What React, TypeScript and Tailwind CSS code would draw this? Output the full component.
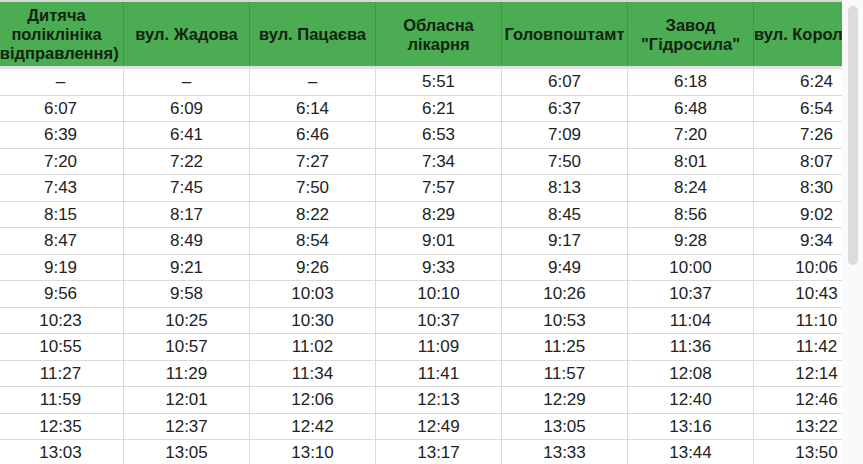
const headers: string[][] = [
  ["Дитяча", "поліклініка", "(відправлення)"],
  ["вул. Жадова"],
  ["вул. Пацаєва"],
  ["Обласна", "лікарня"],
  ["Головпоштамт"],
  ["Завод", "\"Гідросила\""],
  ["вул. Короленка"],
];

const rows: string[][] = [
  ["–", "–", "–", "5:51", "6:07", "6:18", "6:24"],
  ["6:07", "6:09", "6:14", "6:21", "6:37", "6:48", "6:54"],
  ["6:39", "6:41", "6:46", "6:53", "7:09", "7:20", "7:26"],
  ["7:20", "7:22", "7:27", "7:34", "7:50", "8:01", "8:07"],
  ["7:43", "7:45", "7:50", "7:57", "8:13", "8:24", "8:30"],
  ["8:15", "8:17", "8:22", "8:29", "8:45", "8:56", "9:02"],
  ["8:47", "8:49", "8:54", "9:01", "9:17", "9:28", "9:34"],
  ["9:19", "9:21", "9:26", "9:33", "9:49", "10:00", "10:06"],
  ["9:56", "9:58", "10:03", "10:10", "10:26", "10:37", "10:43"],
  ["10:23", "10:25", "10:30", "10:37", "10:53", "11:04", "11:10"],
  ["10:55", "10:57", "11:02", "11:09", "11:25", "11:36", "11:42"],
  ["11:27", "11:29", "11:34", "11:41", "11:57", "12:08", "12:14"],
  ["11:59", "12:01", "12:06", "12:13", "12:29", "12:40", "12:46"],
  ["12:35", "12:37", "12:42", "12:49", "13:05", "13:16", "13:22"],
  ["13:03", "13:05", "13:10", "13:17", "13:33", "13:44", "13:50"],
];

export default function App() {
  return (
    <div className="flex h-[464px] w-[863px] overflow-hidden bg-white font-['Liberation_Sans',Arial,sans-serif]">
      <div className="w-[842px] shrink-0 overflow-hidden">
        <div className="-ml-[2px] w-[882px]">
          <div className="flex h-[69px] border-t-2 border-b-[3px] border-t-[#d8d8d8] border-b-[#e2e2e2] bg-[#4cac53]">
            {headers.map((lines, i) => (
              <div
                key={i}
                className={`flex w-[126px] shrink-0 flex-col items-center justify-center border-r border-[#3f9746] pt-[1px] text-center text-[16.5px] font-bold leading-[19px] whitespace-nowrap text-[#10240f] ${i === 0 ? "pr-[8px]" : ""}`}
              >
                {lines.map((l) => (
                  <span key={l}>{l}</span>
                ))}
              </div>
            ))}
          </div>
          {rows.map((row, r) => (
            <div key={r} className="flex h-[26.5px] border-b border-[#dadada]">
              {row.map((cell, c) => (
                <div
                  key={c}
                  className="flex w-[126px] shrink-0 items-center justify-center border-r border-[#dadada] text-[17px] text-[#222]"
                >
                  {cell}
                </div>
              ))}
            </div>
          ))}
        </div>
      </div>
      <div className="flex w-[21px] shrink-0 justify-center bg-[#fafafa] pt-[6px]">
        <div className="h-[259px] w-[10px] rounded-full bg-[#dcdcdc]" />
      </div>
    </div>
  );
}
